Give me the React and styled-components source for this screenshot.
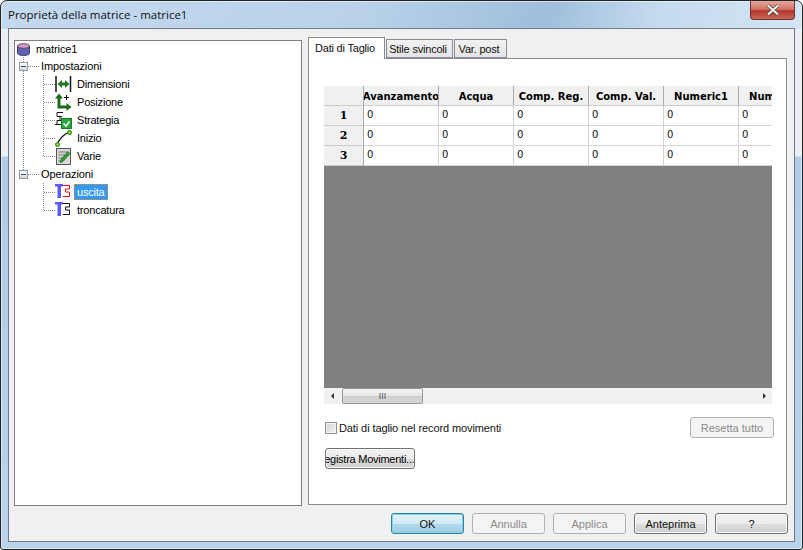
import React from 'react';
import styled, { createGlobalStyle } from 'styled-components';

const columns = ['Avanzamento', 'Acqua', 'Comp. Reg.', 'Comp. Val.', 'Numeric1', 'Numeric2'];
const rows = [1, 2, 3];

function DatabaseIcon() {
  return (
    <svg width="13" height="13" viewBox="0 0 13 13">
      <path d="M.5 3v7c0 1.500 2.500 2.500 6 2.500s6-1 6-2.500V3z" fill="#5f62b0" stroke="#3c3f74" />
      <ellipse cx="6.500" cy="3" rx="6" ry="2.300" fill="#d79bc0" stroke="#5c4a78" />
    </svg>
  );
}

function DimensionIcon() {
  return (
    <svg width="17" height="16" viewBox="0 0 17 16">
      <path d="M1 0v16M15.500 0v16" stroke="#111" strokeWidth="1.500" />
      <path d="M2.500 8l4.500-4v2.500h3V4l4.500 4-4.500 4V9.500H7V12z" fill="#1f7a1f" />
    </svg>
  );
}

function PositionIcon() {
  return (
    <svg width="17" height="18" viewBox="0 0 17 18">
      <path d="M4 4v10h9" fill="none" stroke="#1c6b1c" strokeWidth="3" />
      <path d="M0 5.500L4 .5l4 5zM11.500 10l5 4-5 4z" fill="#1c6b1c" />
      <path d="M11.500 2v5M9 4.500h5" stroke="#111" />
    </svg>
  );
}

function StrategyIcon() {
  return (
    <svg width="17" height="17" viewBox="0 0 17 17">
      <path d="M2 .5h6M2 .5v4h5M5 4.500v4M2 8.500h7M0 12.500h6M2 12.500v-4" fill="none" stroke="#111" />
      <rect x="6.500" y="6.500" width="10" height="10" fill="#24a93a" stroke="#187a2a" />
      <path d="M8.500 11.500l2.500 2.500 3.500-4.500" fill="none" stroke="#fff" strokeWidth="1.600" />
    </svg>
  );
}

function StartIcon() {
  return (
    <svg width="17" height="17" viewBox="0 0 17 17">
      <path d="M2.500 14.500c.5-3.500 2-5 4-7s3.500-4.500 8-5" fill="none" stroke="#111" strokeWidth="1.200" />
      <circle cx="2.500" cy="14.500" r="2" fill="#6ee02a" stroke="#2c7a12" />
      <circle cx="14.500" cy="2.500" r="2" fill="#6ee02a" stroke="#2c7a12" />
    </svg>
  );
}

function NotesIcon() {
  return (
    <svg width="16" height="17" viewBox="0 0 16 17">
      <rect x="1.500" y=".5" width="14" height="16" fill="#d8d8d8" stroke="#555" />
      <path d="M3.500 4h9M3.500 7h7M3.500 10h5M3.500 13h3" stroke="#777" />
      <path d="M5 14.500l1-3 7-8 2 2-7 8z" fill="#2f9e35" stroke="#16601b" strokeWidth=".7" />
    </svg>
  );
}

function CutIcon({ color }) {
  return (
    <svg width="16" height="18" viewBox="0 0 16 18">
      <path d="M0 1h8v2.500H6V15H2.500V3.500H0z" fill="#5a5af0" />
      <path d="M8 2.500h6.500V6h-4v3h4v4.500H8" fill="none" stroke={color} />
    </svg>
  );
}

function GridBlock() {
  return (
    <Grid>
      <GridTable>
        <HeaderCorner />
        {columns.map((name) => (
          <HeaderCell key={name}>{name}</HeaderCell>
        ))}
        {rows.map((row) => (
          <React.Fragment key={row}>
            <RowHead>{row}</RowHead>
            {columns.map((name) => (
              <Cell key={name}>0</Cell>
            ))}
          </React.Fragment>
        ))}
      </GridTable>
      <GridEmpty />
      <ScrollBar>
        <ScrollArrow $side="left" />
        <ScrollTrack>
          <ScrollThumb>III</ScrollThumb>
        </ScrollTrack>
        <ScrollArrow $side="right" />
      </ScrollBar>
    </Grid>
  );
}

export default function App() {
  return (
    <>
      <GlobalStyle />
      <Frame>
        <TitleBar>
          <Title>Proprietà della matrice - matrice1</Title>
          <CloseButton>
            <svg width="16" height="12" viewBox="0 0 16 12">
              <path d="M3 1.500l10 9M13 1.500l-10 9" stroke="#4a4a4a" strokeWidth="3.600" />
              <path d="M3 1.500l10 9M13 1.500l-10 9" stroke="#f4f4f4" strokeWidth="2" />
            </svg>
          </CloseButton>
        </TitleBar>
        <Client>
          <Main>
            <TreePanel>
              <RootRow>
                <RootIcon><DatabaseIcon /></RootIcon>
                <RootLabel>matrice1</RootLabel>
              </RootRow>
              <TreeRow>
                <Guide $mode="tee" $group><Expander /></Guide>
                <GroupLabel>Impostazioni</GroupLabel>
              </TreeRow>
              <TreeRow>
                <Guide $mode="line" />
                <Guide $mode="tee" />
                <ItemIcon><DimensionIcon /></ItemIcon>
                <ItemLabel>Dimensioni</ItemLabel>
              </TreeRow>
              <TreeRow>
                <Guide $mode="line" />
                <Guide $mode="tee" />
                <ItemIcon><PositionIcon /></ItemIcon>
                <ItemLabel>Posizione</ItemLabel>
              </TreeRow>
              <TreeRow>
                <Guide $mode="line" />
                <Guide $mode="tee" />
                <ItemIcon><StrategyIcon /></ItemIcon>
                <ItemLabel>Strategia</ItemLabel>
              </TreeRow>
              <TreeRow>
                <Guide $mode="line" />
                <Guide $mode="tee" />
                <ItemIcon><StartIcon /></ItemIcon>
                <ItemLabel>Inizio</ItemLabel>
              </TreeRow>
              <TreeRow>
                <Guide $mode="line" />
                <Guide $mode="end" />
                <ItemIcon><NotesIcon /></ItemIcon>
                <ItemLabel>Varie</ItemLabel>
              </TreeRow>
              <TreeRow>
                <Guide $mode="end" $group><Expander /></Guide>
                <GroupLabel>Operazioni</GroupLabel>
              </TreeRow>
              <TreeRow>
                <Guide />
                <Guide $mode="tee" />
                <ItemIcon><CutIcon color="#e01010" /></ItemIcon>
                <ItemLabel $selected>uscita</ItemLabel>
              </TreeRow>
              <TreeRow>
                <Guide />
                <Guide $mode="end" />
                <ItemIcon><CutIcon color="#111" /></ItemIcon>
                <ItemLabel>troncatura</ItemLabel>
              </TreeRow>
            </TreePanel>
            <TabArea>
              <TabStrip>
                <Tab $active $width={77}>Dati di Taglio</Tab>
                <Tab $width={67}>Stile svincoli</Tab>
                <Tab $width={53}>Var. post</Tab>
              </TabStrip>
              <TabPane>
                <GridBlock />
                <OptionRow>
                  <CheckLabel>
                    <CheckBox />
                    Dati di taglio nel record movimenti
                  </CheckLabel>
                  <ResetButton disabled>Resetta tutto</ResetButton>
                </OptionRow>
                <RecordButton><RecordText>Registra Movimenti...</RecordText></RecordButton>
              </TabPane>
            </TabArea>
          </Main>
          <Footer>
            <DialogButton $primary>OK</DialogButton>
            <DialogButton disabled>Annulla</DialogButton>
            <DialogButton disabled>Applica</DialogButton>
            <DialogButton>Anteprima</DialogButton>
            <DialogButton>?</DialogButton>
          </Footer>
        </Client>
      </Frame>
    </>
  );
}

const GlobalStyle = createGlobalStyle`
  html, body {
    margin: 0;
    padding: 0;
    background: #fff;
  }
`;

const Frame = styled.div`
  width: 803px;
  height: 550px;
  box-sizing: border-box;
  display: flex;
  flex-direction: column;
  padding: 0 7px 7px 7px;
  border: 1px solid #222;
  border-radius: 7px 7px 3px 3px;
  overflow: hidden;
  box-shadow: inset 0 0 0 1px rgba(255, 255, 255, 0.55);
  background:
    linear-gradient(105deg, #c3d9ee 0%, #b9d2ea 45%, #9fbedb 68%, #c5dbef 82%, #d4e5f5 100%) 0 0 / 100% 28px no-repeat,
    linear-gradient(#e9eff5 0, #e9eff5 155px, #aecbe7 156px, #b9d3ec 100%);
  font-family: 'Liberation Sans', Arial, sans-serif;
  font-size: 11px;
  color: #000;
`;

const TitleBar = styled.div`
  height: 27px;
  flex: none;
  display: flex;
  align-items: flex-start;
  justify-content: space-between;
`;

const Title = styled.div`
  font-family: 'Open Sans', 'Noto Sans', sans-serif;
  font-size: 11.5px;
  line-height: 16px;
  margin-top: 6px;
  color: #111;
`;

const CloseButton = styled.div`
  width: 45px;
  height: 19px;
  box-sizing: border-box;
  display: flex;
  align-items: center;
  justify-content: center;
  border: 1px solid #6e3030;
  border-top: 0;
  border-radius: 0 0 4px 4px;
  background: linear-gradient(#e3a79d 0%, #d2766a 45%, #b5342a 55%, #c9685c 100%);
`;

const Client = styled.div`
  flex: 1;
  min-height: 0;
  box-sizing: border-box;
  display: flex;
  flex-direction: column;
  padding: 11px 7px 7px 5px;
  background: #f0f0f0;
  border: 1px solid #6d7a87;
`;

const Main = styled.div`
  flex: 1;
  min-height: 0;
  display: flex;
  gap: 6px;
`;

const TreePanel = styled.div`
  width: 288px;
  height: 466px;
  flex: none;
  box-sizing: border-box;
  background: #fff;
  border: 1px solid #7f7f7f;
`;

const TreeRow = styled.div`
  height: 18px;
  display: flex;
  align-items: center;
`;

const RootRow = styled(TreeRow)`
  height: 16px;
`;

const RootIcon = styled.span`
  width: 13px;
  margin-left: 2px;
  display: flex;
`;

const RootLabel = styled.span`
  margin: 0 0 1px 6px;
  line-height: 14px;
  letter-spacing: -0.1px;
`;

const Guide = styled.span`
  position: relative;
  width: 20px;
  height: 18px;
  flex: none;
  display: flex;
  align-items: center;

  &::before {
    content: '';
    position: absolute;
    top: 0;
    bottom: ${(p) => (p.$mode === 'end' ? '9px' : '0')};
    left: 8px;
    width: 1px;
    background: ${(p) => (p.$mode ? 'linear-gradient(#888 50%, transparent 50%) 0 0 / 1px 2px repeat-y' : 'none')};
  }

  &::after {
    content: '';
    display: ${(p) => (p.$mode === 'tee' || p.$mode === 'end' ? 'block' : 'none')};
    position: absolute;
    top: 9px;
    left: 9px;
    width: ${(p) => (p.$group ? '16px' : '11px')};
    height: 1px;
    background: linear-gradient(90deg, #888 50%, transparent 50%) 0 0 / 2px 1px repeat-x;
  }
`;

const Expander = styled.span`
  position: relative;
  z-index: 1;
  margin-left: 4px;
  width: 9px;
  height: 9px;
  box-sizing: border-box;
  border: 1px solid #8e9aa5;
  background: linear-gradient(#fff, #d4d8dc);

  &::before {
    content: '';
    position: absolute;
    left: 1px;
    top: 3px;
    width: 5px;
    height: 1px;
    background: #3a4a7a;
  }
`;

const GroupLabel = styled.span`
  margin-left: 6px;
  line-height: 14px;
  letter-spacing: -0.1px;
`;

const ItemIcon = styled.span`
  width: 17px;
  flex: none;
  display: flex;
`;

const ItemLabel = styled.span`
  margin-left: 2px;
  padding: 0 2px;
  line-height: 14px;
  letter-spacing: -0.2px;
  box-sizing: border-box;
  border: 1px dotted ${(p) => (p.$selected ? '#e08a30' : 'transparent')};
  background: ${(p) => (p.$selected ? '#3399ff' : 'transparent')};
  color: ${(p) => (p.$selected ? '#fff' : '#000')};
`;

const TabArea = styled.div`
  flex: 1;
  min-width: 0;
  display: flex;
  flex-direction: column;
  height: 468px;
  margin-top: -3px;
`;

const TabStrip = styled.div`
  height: 21px;
  flex: none;
  display: flex;
  align-items: flex-end;
  position: relative;
  z-index: 1;
`;

const Tab = styled.div`
  width: ${(p) => p.$width}px;
  height: ${(p) => (p.$active ? '22px' : '19px')};
  margin-bottom: ${(p) => (p.$active ? '-1px' : '0')};
  margin-right: 1px;
  padding: ${(p) => (p.$active ? '0 3px 2px 0' : '1px 3px 0 0')};
  box-sizing: border-box;
  display: flex;
  align-items: center;
  justify-content: center;
  line-height: 14px;
  letter-spacing: -0.2px;
  color: #111;
  border: 1px solid #898c95;
  border-bottom: ${(p) => (p.$active ? '0' : '1px solid #898c95')};
  background: ${(p) => (p.$active ? '#fff' : 'linear-gradient(#f2f2f2, #e4e4e4)')};
`;

const TabPane = styled.div`
  flex: 1;
  min-height: 0;
  box-sizing: border-box;
  padding: 27px 14px 0 15px;
  background: #fff;
  border: 1px solid #898c95;
`;

const Grid = styled.div`
  width: 448px;
  height: 318px;
  display: flex;
  flex-direction: column;
  overflow: hidden;
`;

const GridTable = styled.div`
  flex: none;
  display: grid;
  grid-template-columns: 40px 75px 75px 75px 75px 75px 75px;
  grid-auto-rows: 20px;
  background: #fff;
`;

const HeaderCorner = styled.div`
  box-sizing: border-box;
  height: 20px;
  background: #f0f0f0;
  border-bottom: 1px solid #ccc;
  border-right: 1px solid #aaa;
`;

const HeaderCell = styled.div`
  padding-top: 1px;
  box-sizing: border-box;
  height: 20px;
  display: flex;
  align-items: center;
  justify-content: center;
  overflow: hidden;
  white-space: nowrap;
  font-family: 'DejaVu Sans', sans-serif;
  font-size: 10px;
  font-weight: 700;
  background: #f0f0f0;
  border-bottom: 1px solid #ccc;
  border-right: 1px solid #aaa;
`;

const RowHead = styled.div`
  display: flex;
  align-items: center;
  justify-content: center;
  font-family: 'DejaVu Serif', serif;
  font-size: 11px;
  font-weight: 700;
  background: #f0f0f0;
  border-bottom: 1px solid #ccc;
  border-right: 1px solid #aaa;
`;

const Cell = styled.div`
  padding: 3px 0 0 3px;
  font-family: 'DejaVu Sans', sans-serif;
  font-size: 10px;
  line-height: 12px;
  color: #111;
  border-bottom: 1px solid #d4d4d4;
  border-right: 1px solid #d4d4d4;
`;

const GridEmpty = styled.div`
  flex: 1;
  background: #808080;
`;

const ScrollBar = styled.div`
  height: 16px;
  flex: none;
  display: flex;
  align-items: stretch;
  background: #f1f1f1;
`;

const ScrollArrow = styled.div`
  width: 16px;
  flex: none;
  display: flex;
  align-items: center;
  justify-content: center;

  &::before {
    content: '';
    border-top: 3px solid transparent;
    border-bottom: 3px solid transparent;
    border-${(p) => (p.$side === 'left' ? 'right' : 'left')}: 3px solid #333;
  }
`;

const ScrollTrack = styled.div`
  flex: 1;
  padding-left: 2px;
  display: flex;
`;

const ScrollThumb = styled.div`
  width: 81px;
  box-sizing: border-box;
  display: flex;
  align-items: center;
  justify-content: center;
  font-size: 9px;
  color: #555;
  border: 1px solid #979797;
  border-radius: 2px;
  background: linear-gradient(#f4f4f4, #e6e6e6 50%, #cfcfcf 52%, #d8d8d8);
`;

const OptionRow = styled.div`
  margin-top: 13px;
  height: 21px;
  display: flex;
  align-items: center;
  justify-content: space-between;
  padding-left: 1px;
  margin-right: -2px;
`;

const CheckLabel = styled.label`
  display: flex;
  align-items: center;
  gap: 2px;
  color: #111;
  letter-spacing: -0.1px;
`;

const CheckBox = styled.span`
  width: 12px;
  height: 12px;
  box-sizing: border-box;
  border: 1px solid #8e8f8f;
  background: linear-gradient(135deg, #d0d0d0, #f4f4f4);
  box-shadow: inset 0 0 0 1px #f4f4f4;
`;

const ButtonBase = styled.button`
  box-sizing: border-box;
  font-family: 'Liberation Sans', Arial, sans-serif;
  font-size: 11px;
  padding: 0;
  color: #111;
  border: 1px solid #707070;
  border-radius: 3px;
  background: linear-gradient(#f2f2f2, #ebebeb 50%, #dddddd 52%, #cfcfcf);
  box-shadow: inset 0 0 0 1px #fbfbfb;

  &:disabled {
    color: #8a8a8a;
    border-color: #adb2b5;
    background: #f4f4f4;
    box-shadow: none;
  }
`;

const ResetButton = styled(ButtonBase)`
  width: 84px;
  height: 21px;
`;

const RecordButton = styled(ButtonBase)`
  display: flex;
  justify-content: center;
  overflow: hidden;
  white-space: nowrap;
  width: 90px;
  height: 21px;
  margin: 10px 0 0 1px;
  align-items: center;
  color: #000;
`;

const RecordText = styled.span`
  padding-right: 9px;
  letter-spacing: -0.25px;
`;

const Footer = styled.div`
  height: 21px;
  flex: none;
  display: flex;
  justify-content: flex-end;
  gap: 8px;
  margin-right: -1px;
`;

const DialogButton = styled(ButtonBase)`
  width: 73px;
  height: 21px;
  ${(p) => p.$primary && `
    border-color: #2d7f9f;
    background: linear-gradient(#e6f4fb, #cfe8f5 50%, #b3d9ec 52%, #9fcbe2);
    box-shadow: inset 0 0 0 1px #7fd4f0;
  `}
`;
